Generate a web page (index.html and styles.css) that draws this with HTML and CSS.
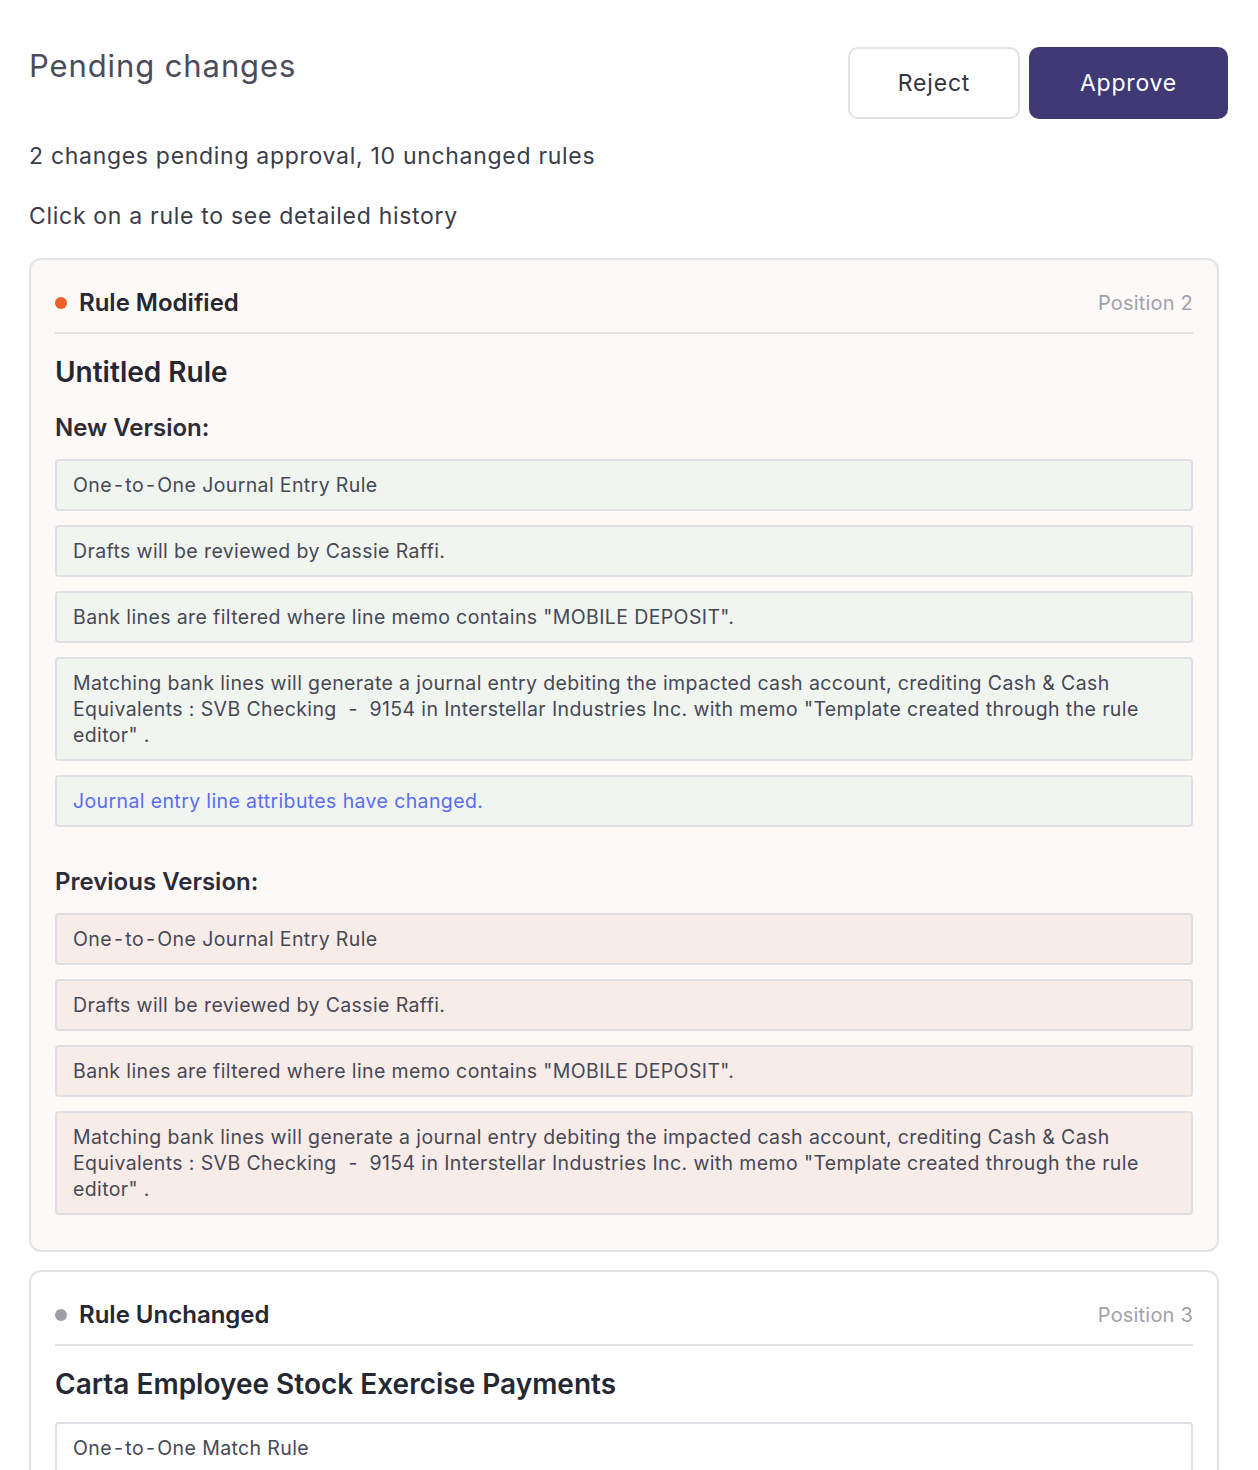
FILE: index.html
```html
<!DOCTYPE html>
<html lang="en">
<head>
    <meta charset="UTF-8"/>
    <meta name="viewport" content="width=device-width, initial-scale=1.0"/>
    <title>Pending changes</title>
    <link rel="stylesheet" href="styles.css">
</head>
<body>
<div class="page">
    <div class="page-header">
        <h1>Pending changes</h1>
        <div class="actions">
            <button class="btn btn-reject">Reject</button>
            <button class="btn btn-approve">Approve</button>
        </div>
    </div>

    <p class="summary">2 changes pending approval, 10 unchanged rules</p>
    <p class="summary">Click on a rule to see detailed history</p>

    <!-- Modified rule -->
    <div class="rule-card modified">
        <div class="rule-head">
            <div class="status"><span class="dot orange"></span>Rule Modified</div>
            <div class="position">Position 2</div>
        </div>
        <h2 class="rule-name">Untitled Rule</h2>

        <h3 class="version-title">New Version:</h3>
        <div class="lines">
            <div class="line new">One<span class="dash">-</span>to<span class="dash">-</span>One Journal Entry Rule</div>
            <div class="line new">Drafts will be reviewed by Cassie Raffi.</div>
            <div class="line new">Bank lines are filtered where line memo contains "MOBILE DEPOSIT".</div>
            <div class="line new">Matching bank lines will generate a journal entry debiting the impacted cash account, crediting Cash &amp; Cash Equivalents : SVB Checking&nbsp; -&nbsp; 9154 in Interstellar Industries Inc. with memo "Template created through the rule editor" .</div>
            <div class="line new link">Journal entry line attributes have changed.</div>
        </div>

        <h3 class="version-title">Previous Version:</h3>
        <div class="lines">
            <div class="line old">One<span class="dash">-</span>to<span class="dash">-</span>One Journal Entry Rule</div>
            <div class="line old">Drafts will be reviewed by Cassie Raffi.</div>
            <div class="line old">Bank lines are filtered where line memo contains "MOBILE DEPOSIT".</div>
            <div class="line old">Matching bank lines will generate a journal entry debiting the impacted cash account, crediting Cash &amp; Cash Equivalents : SVB Checking&nbsp; -&nbsp; 9154 in Interstellar Industries Inc. with memo "Template created through the rule editor" .</div>
        </div>
    </div>

    <!-- Unchanged rule -->
    <div class="rule-card">
        <div class="rule-head">
            <div class="status"><span class="dot grey"></span>Rule Unchanged</div>
            <div class="position">Position 3</div>
        </div>
        <h2 class="rule-name">Carta Employee Stock Exercise Payments</h2>
        <div class="lines">
            <div class="line">One<span class="dash">-</span>to<span class="dash">-</span>One Match Rule</div>
            <div class="line">Drafts will be reviewed by Cassie Raffi.</div>
        </div>
    </div>
</div>
</body>
</html>
```

FILE: styles.css
```css
* {
    margin: 0;
    padding: 0;
    box-sizing: border-box;
}
body {
    font-family: Inter, "Noto Sans", sans-serif;
    background: #fff;
    color: #2a2b36;
}
.page {
    padding: 46px 30px 40px 29px;
}
.page-header {
    display: flex;
    justify-content: space-between;
    align-items: flex-start;
}
.page-header h1 {
    font-size: 31px;
    font-weight: 400;
    letter-spacing: 0.9px;
    color: #4b4c5a;
    line-height: 40px;
}
.actions {
    display: flex;
    gap: 9px;
    margin-top: 1px;
}
.btn {
    height: 72px;
    border-radius: 10px;
    font-family: inherit;
    font-size: 23px;
    letter-spacing: 0.8px;
    cursor: pointer;
}
.btn-reject {
    width: 172px;
    background: #fff;
    border: 2px solid #e1e1e6;
    color: #33343f;
}
.btn-approve {
    width: 199px;
    background: #3f3a75;
    border: none;
    color: #fff;
}
.summary {
    font-size: 23px;
    letter-spacing: 0.7px;
    line-height: 30px;
    color: #3b3c47;
    margin-top: 22px;
}
.summary + .summary {
    margin-top: 30px;
}
.rule-card {
    margin: 27px 9px 0 0;
    border: 2px solid #e3e2e7;
    border-radius: 12px;
    background: #fff;
    padding: 27px 24px 35px 24px;
}
.rule-card + .rule-card {
    margin-top: 18px;
}
.rule-card.modified {
    background: #fdf9f7;
    padding-bottom: 35px;
}
.rule-head {
    display: flex;
    justify-content: space-between;
    align-items: center;
    padding-bottom: 13px;
    border-bottom: 2px solid #e2e2e7;
}
.status {
    display: flex;
    align-items: center;
    font-size: 24px;
    font-weight: 600;
    line-height: 32px;
    color: #252733;
}
.dot {
    width: 12px;
    height: 12px;
    border-radius: 50%;
    margin: 0 12px 0 0;
}
.dot.orange {
    background: #ec6128;
}
.dot.grey {
    background: #9e9ea6;
}
.position {
    font-size: 20px;
    letter-spacing: 0.2px;
    color: #a2a1aa;
}
.rule-name {
    font-size: 28px;
    font-weight: 600;
    line-height: 36px;
    color: #252733;
    margin-top: 20px;
}
.version-title {
    font-size: 24px;
    font-weight: 600;
    line-height: 32px;
    color: #2b2c38;
    margin-top: 22px;
}
.lines {
    display: flex;
    flex-direction: column;
    gap: 14px;
    margin-top: 15px;
}
.rule-name + .lines {
    margin-top: 20px;
}
.lines + .version-title {
    margin-top: 39px;
}
.line {
    border: 2px solid #dfdfe5;
    border-radius: 4px;
    background: #fff;
    padding: 11px 16px;
    font-size: 19.5px;
    line-height: 26px;
    color: #474855;
    letter-spacing: 0.38px;
}
.line .dash {
    padding: 0 2px;
}
.line.new {
    background: #f0f5f0;
}
.line.old {
    background: #f8ece9;
}
.line.link {
    color: #5a6cf0;
}
```
